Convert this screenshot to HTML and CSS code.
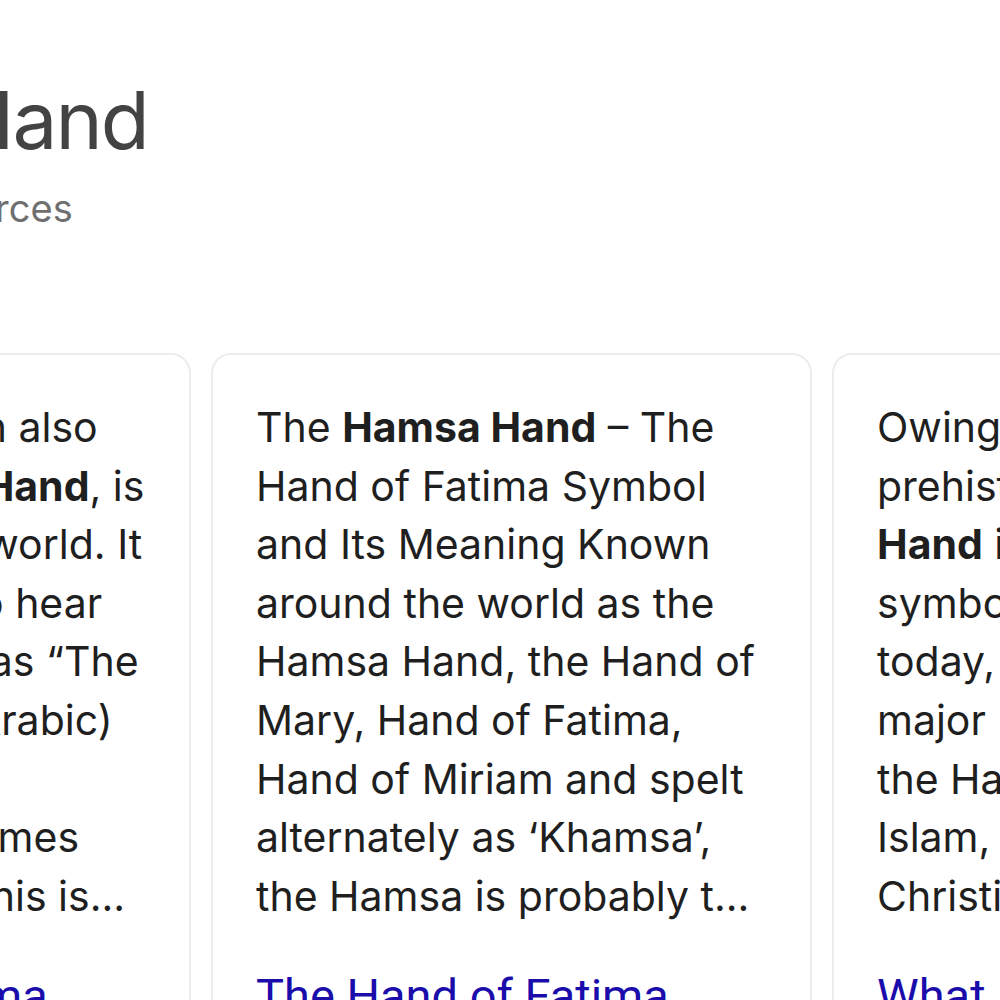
FILE: index.html
```html
<!DOCTYPE html>
<html>
<head>
<meta charset="utf-8">
<link rel="stylesheet" href="styles.css">
</head>
<body>
<div class="page">
  <header class="head">
    <h1 class="title">Hamsa Hand</h1>
    <div class="sub">Results from 3 sources</div>
  </header>
  <div class="row">
    <article class="card">
      <p class="snip">a hamsa which can also<br>called the <b>Hamsa Hand</b>, is<br>Loved around the world. It<br>is quite common to hear<br>this charm known as “The<br>Hand of Fatima” (Arabic)<br>or Hamesh hand.<br>It goes by other names<br>in many cultures, this is...</p>
      <a class="link" href="#">The Hand of Fatima</a>
    </article>
    <article class="card">
      <p class="snip">The <b>Hamsa Hand</b> – The<br>Hand of Fatima Symbol<br>and Its Meaning Known<br>around the world as the<br>Hamsa Hand, the Hand of<br>Mary, Hand of Fatima,<br>Hand of Miriam and spelt<br>alternately as ‘Khamsa’,<br>the Hamsa is probably t...</p>
      <a class="link" href="#">The Hand of Fatima</a>
    </article>
    <article class="card">
      <p class="snip">Owing to its<br>prehistoric origins, the <b>Hamsa</b><br><b>Hand</b> is a popular<br>symbol of protection<br>today, appearing in the<br>major religions such as<br>the Hand of Fatima in<br>Islam, the Hand of Mary in<br>Christianity and Judaism...</p>
      <a class="link" href="#">What is the Hamsa Hand</a>
    </article>
  </div>
</div>
</body>
</html>
```

FILE: styles.css
```css
html, body {
  margin: 0;
  padding: 0;
  background: #ffffff;
  overflow: hidden;
}
body {
  font-family: Inter, "Noto Sans", sans-serif;
  color: #1f1f1f;
  width: 1000px;
  height: 1000px;
}
.page {
  margin-left: -410px;
  width: 2200px;
}
.head {
  padding: 70px 0 0 66px;
}
.title {
  margin: 0;
  padding-left: 27px;
  font-weight: 400;
  font-size: 80px;
  line-height: 100px;
  color: #434343;
  letter-spacing: -2px;
}
.sub {
  margin-top: 13px;
  padding-left: 4px;
  font-size: 38px;
  line-height: 50px;
  color: #6f6f6f;
  white-space: nowrap;
}
.row {
  display: flex;
  gap: 20px;
  margin-top: 120px;
}
.card {
  flex: 0 0 601px;
  min-width: 0;
  overflow: hidden;
  box-sizing: border-box;
  border: 2px solid #ececec;
  border-radius: 20px;
  padding: 43px 43px 0 43px;
  height: 700px;
}
.snip {
  margin: 0;
  font-size: 41px;
  line-height: 58.6px;
  white-space: nowrap;
  color: #1f1f1f;
}
.snip b {
  font-weight: 700;
}
.link {
  display: block;
  margin-top: 42px;
  font-family: Roboto, "Noto Sans", sans-serif;
  font-size: 47px;
  line-height: 58.6px;
  color: #1a0dab;
  text-decoration: none;
  white-space: nowrap;
}
```
